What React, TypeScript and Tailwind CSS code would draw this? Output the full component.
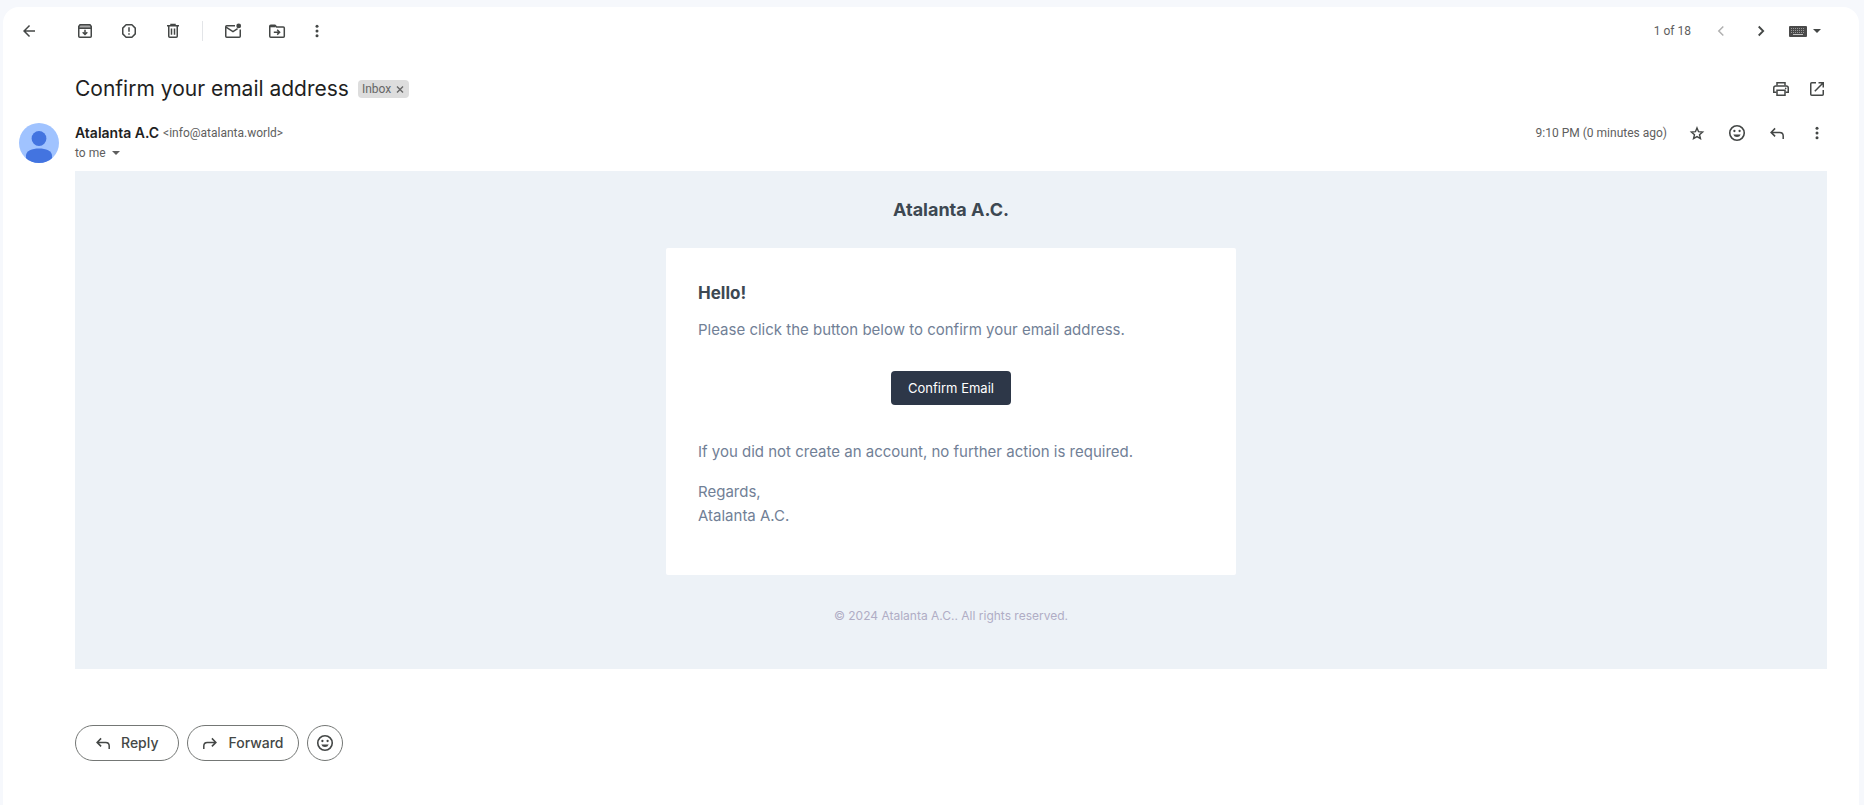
import React from "react";

type IconProps = { children: React.ReactNode; className?: string };

function Icon({ children, className = "" }: IconProps) {
  return (
    <svg
      viewBox="0 0 20 20"
      className={`size-5 shrink-0 ${className}`}
      fill="none"
      stroke="currentColor"
      strokeWidth="1.5"
      aria-hidden="true"
    >
      {children}
    </svg>
  );
}

const BackIcon = () => (
  <Icon>
    <path stroke="none" fill="currentColor" d="M16 9.25H6.87l4.19-4.19L10 4l-6 6 6 6 1.06-1.06-4.19-4.19H16z" />
  </Icon>
);

const ArchiveIcon = () => (
  <Icon>
    <path fill="#a8a8a8" stroke="none" d="M4 4h12v3H4z" />
    <path d="M5 3.75h10L16.25 5.5v9.75q0 1-1 1H4.75q-1 0-1-1V5.5z" strokeLinejoin="round" />
    <path d="M4 7.25h12" />
    <path d="M10 8.8v4.4M7.7 11.2l2.3 2.3 2.3-2.3" />
  </Icon>
);

const ReportIcon = () => (
  <Icon>
    <path d="M7.1 3.75h5.8l3.35 3.35v5.8l-3.35 3.35H7.1L3.75 12.9V7.1z" strokeLinejoin="round" />
    <path d="M10 6.2v4.6M10 12.2v1.6" />
  </Icon>
);

const TrashIcon = () => (
  <Icon>
    <path d="M4 4.75h12M8 4V3.5h4V4" />
    <path d="M5.75 5v10.25q0 1 1 1h6.5q1 0 1-1V5" />
    <path d="M8.5 7.5v6.3M11.5 7.5v6.3" />
  </Icon>
);

const UnreadIcon = () => (
  <Icon>
    <path d="M12 4.75H3.75q-1 0-1 1v9.5q0 1 1 1h12.5q1 0 1-1V8.5" />
    <path d="M3 6.2l7 4.4 4.6-2.9" />
    <circle cx="15.7" cy="4.9" r="2.4" fill="currentColor" stroke="none" />
  </Icon>
);

const MoveIcon = () => (
  <Icon>
    <path d="M2.75 5.2q0-1 1-1H8l1.6 1.9h6.7q1 0 1 1v8.15q0 1-1 1H3.75q-1 0-1-1z" strokeLinejoin="round" />
    <path d="M3 5.3h5.5" strokeWidth="2" />
    <path d="M6.8 11.2h5.6M10.2 8.8l2.4 2.4-2.4 2.4" />
  </Icon>
);

const MoreIcon = () => (
  <Icon>
    <g fill="currentColor" stroke="none">
      <circle cx="10" cy="5.2" r="1.5" />
      <circle cx="10" cy="10" r="1.5" />
      <circle cx="10" cy="14.8" r="1.5" />
    </g>
  </Icon>
);

const PrevIcon = () => (
  <Icon>
    <path d="M12.3 5.5L7.8 10l4.5 4.5" />
  </Icon>
);

const NextIcon = () => (
  <Icon>
    <path d="M7.7 5.5l4.5 4.5-4.5 4.5" strokeWidth="1.8" />
  </Icon>
);

const CaretIcon = () => (
  <svg viewBox="0 0 8 4" className="h-1 w-2 shrink-0" fill="currentColor" aria-hidden="true">
    <path d="M0 0h8L4 4z" />
  </svg>
);

const KeyboardIcon = () => (
  <svg viewBox="0 0 18 11" className="h-[11px] w-[18px] shrink-0" aria-hidden="true">
    <rect width="18" height="11" rx="1" fill="#4a4a4a" />
    <path d="M2 2.5h14M2 4.5h14M2 6.5h14" stroke="#9a9a9a" strokeWidth="1" strokeDasharray="1 1" />
    <path d="M4 8.500h10" stroke="#c4c4c4" />
  </svg>
);

const PrintIcon = () => (
  <Icon>
    <path d="M6 6.5V3.75h8V6.5" />
    <path d="M5.5 13.25H2.75V9q0-2 2-2h10.5q2 0 2 2v4.25H14.5" />
    <path d="M6 11.25h8v5H6z" />
    <circle cx="14.7" cy="9.4" r=".8" fill="currentColor" stroke="none" />
  </Icon>
);

const OpenIcon = () => (
  <Icon>
    <path d="M9 3.75H4.75q-1 0-1 1v10.5q0 1 1 1h10.5q1 0 1-1V11" />
    <path d="M11.5 3.75h4.75V8.5M16 4l-8.2 8.2" />
  </Icon>
);

const StarIcon = () => (
  <Icon>
    <path
      strokeWidth="1.4"
      d="M10 4.900l1.550 3.800 4.050.350-3.100 2.650.950 3.950L10 13.550l-3.450 2.100.950-3.950-3.100-2.650 4.050-.350z"
    />
  </Icon>
);

const SmileIcon = () => (
  <Icon>
    <circle cx="10" cy="10" r="7.25" strokeWidth="1.6" />
    <circle cx="7.4" cy="8" r="1.15" fill="currentColor" stroke="none" />
    <circle cx="12.6" cy="8" r="1.15" fill="currentColor" stroke="none" />
    <path d="M6.3 11.4h7.4A3.9 3.9 0 0 1 10 14a3.9 3.9 0 0 1-3.7-2.6z" fill="currentColor" stroke="none" />
  </Icon>
);

const ReplyIcon = ({ className = "" }: { className?: string }) => (
  <Icon className={className}>
    <path d="M8.1 5.4L4.1 9.4l4 4M4.1 9.4h8.6q3.5 0 3.5 3.5V16" />
  </Icon>
);

function IconButton({ label, size, children }: { label: string; size: string; children: React.ReactNode }) {
  return (
    <button type="button" aria-label={label} title={label} className={`flex shrink-0 items-center justify-center ${size}`}>
      {children}
    </button>
  );
}

function Toolbar() {
  return (
    <header className="flex h-12 items-center pl-1 pr-8">
      <IconButton label="Back to Inbox" size="size-11"><BackIcon /></IconButton>
      <div className="ml-3 flex items-center">
        <IconButton label="Archive" size="size-11"><ArchiveIcon /></IconButton>
        <IconButton label="Report spam" size="size-11"><ReportIcon /></IconButton>
        <IconButton label="Delete" size="size-11"><TrashIcon /></IconButton>
      </div>
      <div className="ml-[7px] mr-2 h-5 w-px bg-[#e3e5e8]" />
      <IconButton label="Mark as unread" size="size-11"><UnreadIcon /></IconButton>
      <IconButton label="Move to" size="size-11"><MoveIcon /></IconButton>
      <IconButton label="More" size="size-9"><MoreIcon /></IconButton>

      <div className="ml-auto flex items-center">
        <span className="mr-[10px] font-['Roboto',sans-serif] text-xs text-[#5e5e5e]">1 of 18</span>
        <span className="flex text-[#b0b0b0]">
          <IconButton label="Newer" size="size-10"><PrevIcon /></IconButton>
        </span>
        <IconButton label="Older" size="size-10"><NextIcon /></IconButton>
        <button type="button" aria-label="Select input tool" className="flex h-10 items-center gap-[6px] pl-2 pr-[6px]">
          <KeyboardIcon />
          <CaretIcon />
        </button>
      </div>
    </header>
  );
}

function Avatar() {
  return (
    <svg viewBox="0 0 40 40" className="size-10 shrink-0" role="img" aria-label="Atalanta A.C">
      <defs>
        <clipPath id="avatar-clip">
          <circle cx="20" cy="20" r="20" />
        </clipPath>
      </defs>
      <g clipPath="url(#avatar-clip)">
        <rect width="40" height="40" fill="#a0c3ff" />
        <circle cx="20" cy="15.5" r="7.4" fill="#4374e0" />
        <path d="M7 40v-7.5C7 28 13 25.5 20 25.5S33 28 33 32.5V40z" fill="#4374e0" />
      </g>
    </svg>
  );
}

function EmailBody() {
  return (
    <section className="bg-[#edf2f7] px-4 pb-[45px] pt-[27px]">
      <p className="text-center text-lg leading-6 font-bold text-[#3d4852]">Atalanta A.C.</p>
      <div className="mx-auto mt-[26px] max-w-[570px] rounded-xs bg-white px-8 pb-[47px] pt-[33px] text-[15px] leading-6 text-[#718096]">
        <h2 className="text-[17px] leading-6 font-bold text-[#3d4852]">Hello!</h2>
        <p className="mt-[13px]">Please click the button below to confirm your email address.</p>
        <div className="mt-[29px] flex justify-center">
          <a href="#confirm" className="flex h-[34px] items-center rounded-sm bg-[#2d3748] px-[17px] text-[13px] text-white">
            Confirm Email
          </a>
        </div>
        <p className="mt-[35px]">If you did not create an account, no further action is required.</p>
        <p className="mt-4">
          Regards,
          <br />
          Atalanta A.C.
        </p>
      </div>
      <p className="mt-[33px] text-center text-xs text-[#b0adc5]">© 2024 Atalanta A.C.. All rights reserved.</p>
    </section>
  );
}

export default function App() {
  return (
    <div className="flex min-h-screen flex-col bg-[#f6f8fc] pl-[3px] pr-[5px] pt-[7px] font-['Inter',sans-serif] text-[#444746]">
      <main className="flex-1 rounded-t-2xl bg-white">
        <Toolbar />

        <div className="mt-[14px] flex h-10 items-center pl-[72px] pr-6">
          <h1 className="text-[21px] leading-7 text-[#1f1f1f]">Confirm your email address</h1>
          <span className="ml-[9px] flex h-[18px] items-center gap-[3px] rounded bg-[#ddd] pl-1 pr-[3px] font-['Roboto',sans-serif] text-xs text-[#666]">
            Inbox
            <button type="button" aria-label="Remove label Inbox" className="flex size-3 items-center justify-center">
              <svg viewBox="0 0 8 8" className="size-2" stroke="currentColor" strokeWidth="1.4" aria-hidden="true">
                <path d="M1 1.500l6 6M7 1.500l-6 6" />
              </svg>
            </button>
          </span>
          <div className="ml-auto flex">
            <IconButton label="Print all" size="size-9"><PrintIcon /></IconButton>
            <IconButton label="In new window" size="size-9"><OpenIcon /></IconButton>
          </div>
        </div>

        <div className="mt-[14px] flex pl-4 pr-[22px]">
          <Avatar />
          <div className="ml-4 flex min-w-0 flex-1 flex-col">
            <div className="flex h-5 items-center">
              <span className="text-sm font-semibold text-[#1f1f1f]">Atalanta A.C</span>
              <span className="ml-1 font-['Roboto',sans-serif] text-xs text-[#5e5e5e]">&lt;info@atalanta.world&gt;</span>
              <div className="ml-auto flex items-center">
                <time className="mr-[10px] font-['Roboto',sans-serif] text-xs text-[#5e5e5e]">9:10 PM (0 minutes ago)</time>
                <IconButton label="Star" size="h-5 w-10"><StarIcon /></IconButton>
                <IconButton label="Add reaction" size="h-5 w-10"><SmileIcon /></IconButton>
                <IconButton label="Reply" size="h-5 w-10"><ReplyIcon /></IconButton>
                <IconButton label="More" size="h-5 w-10"><MoreIcon /></IconButton>
              </div>
            </div>
            <button type="button" aria-label="Show details" className="flex h-5 items-center gap-[6px] self-start font-['Roboto',sans-serif] text-xs text-[#5e5e5e]">
              to me
              <CaretIcon />
            </button>
          </div>
        </div>

        <div className="mt-2 pl-[72px] pr-8">
          <EmailBody />
          <div className="mt-14 flex gap-2 pb-11 text-sm font-medium">
            <button type="button" className="flex h-9 items-center gap-2 rounded-full border border-[#747775] pl-[17px] pr-5">
              <ReplyIcon />
              Reply
            </button>
            <button type="button" className="flex h-9 items-center gap-2 rounded-full border border-[#747775] pl-3 pr-[14px]">
              <ReplyIcon className="-scale-x-100" />
              Forward
            </button>
            <button type="button" aria-label="Add reaction" className="flex size-9 items-center justify-center rounded-full border border-[#747775]">
              <SmileIcon />
            </button>
          </div>
        </div>
      </main>
    </div>
  );
}
